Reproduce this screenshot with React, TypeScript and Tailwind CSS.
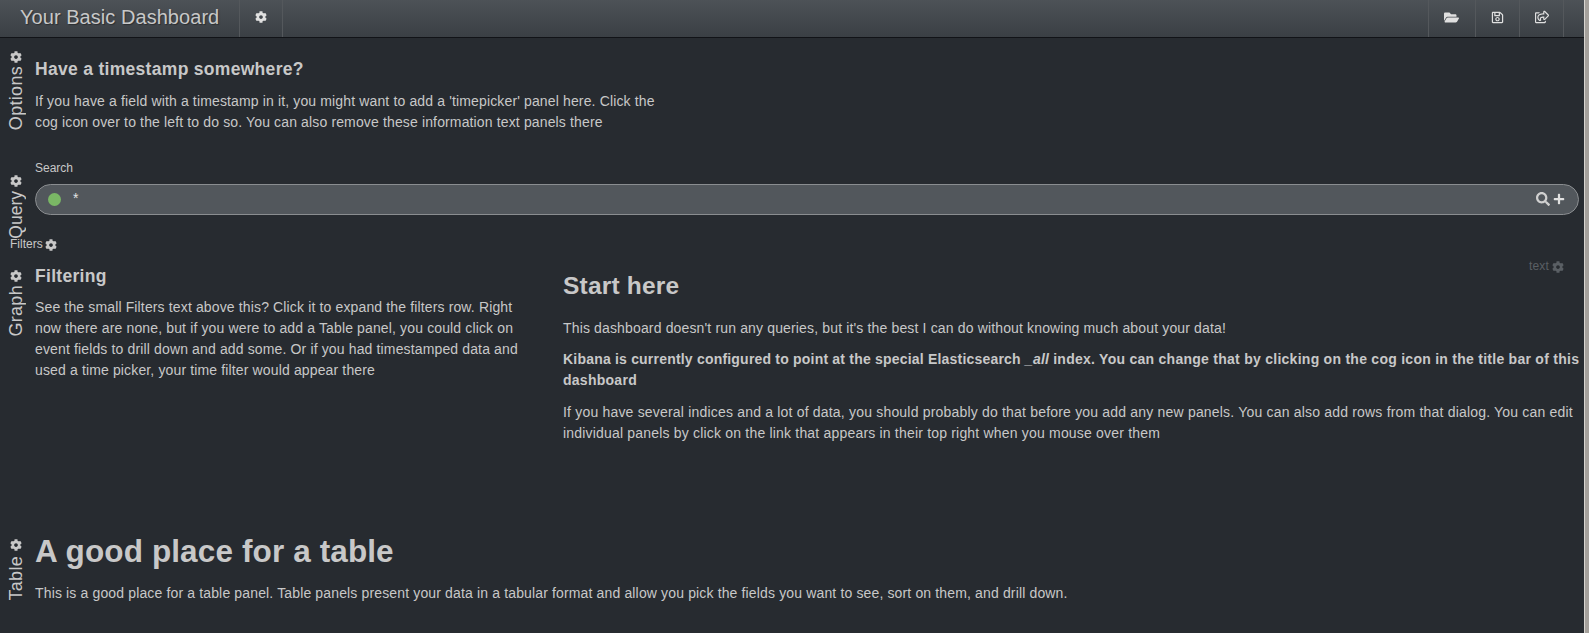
import React from "react";
import { FaCog, FaFolderOpen, FaRegSave, FaRegShareSquare, FaSearch, FaPlus } from "react-icons/fa";

function RowLabel({ label, className, labelClass }: { label: string; className: string; labelClass: string }) {
  return (
    <div className={"w-[35px] shrink-0 flex flex-col items-center " + className}>
      <FaCog className="shrink-0 text-[12px] text-[#c8c8c8] mb-[3px] ml-[-3px]" />
      <span className={"[writing-mode:vertical-rl] rotate-180 leading-[20px] text-[#c8c8c8] ml-[-3px] whitespace-nowrap " + labelClass}>{label}</span>
    </div>
  );
}

function NavCell({ children, className }: { children: React.ReactNode; className: string }) {
  return <div className={"h-full flex items-center justify-center pb-[3px] border-l border-[#54585c] " + className}>{children}</div>;
}

export default function App() {
  return (
    <div className="w-[1589px] h-[633px] overflow-hidden flex bg-[#272b30] text-[#c8c8c8] text-[14px] leading-[21px] font-['Liberation_Sans',Arial,sans-serif]">
      <div className="w-[1584px] shrink-0 flex flex-col">
        <div className="h-[38px] shrink-0 flex border-b border-[#111317] bg-gradient-to-b from-[#4d5257] to-[#3a3f44]">
          <div className="w-[239px] pl-[20px] text-[20px] leading-[34px] tracking-[0.05px] text-[#c8c8c8] [text-shadow:1px_1px_1px_rgba(0,0,0,0.35)]">Your Basic Dashboard</div>
          <NavCell className="w-[44px] border-r"><FaCog className="text-[12px] text-[#e0e0e0]" /></NavCell>
          <div className="flex-1" />
          <NavCell className="w-[47px] pr-[2px]"><FaFolderOpen className="text-[15px] text-[#e0e0e0]" /></NavCell>
          <NavCell className="w-[44px]"><FaRegSave className="text-[13px] text-[#e0e0e0]" /></NavCell>
          <NavCell className="w-[44px]"><FaRegShareSquare className="text-[14px] text-[#e0e0e0]" /></NavCell>
          <NavCell className="w-[21px]"><span /></NavCell>
        </div>

        <div className="h-[112px] shrink-0 flex pt-[13px]">
          <RowLabel label="Options" className="" labelClass="text-[18px] tracking-[0.3px]" />
          <div className="w-[640px] tracking-[0.14px]">
            <h4 className="text-[17.5px] leading-[20px] font-bold tracking-[0.3px] mt-[8px] mb-[12px]">Have a timestamp somewhere?</h4>
            <p>If you have a field with a timestamp in it, you might want to add a 'timepicker' panel here. Click the cog icon over to the left to do so. You can also remove these information text panels there</p>
          </div>
        </div>

        <div className="h-[85px] shrink-0 flex pt-[23px]">
          <RowLabel label="Query" className="mt-[2px]" labelClass="text-[17.5px] mt-[1px]" />
          <div className="flex-1 mr-[5px] mt-[-14px]">
            <div className="text-[12px] leading-[18px] mb-[7px]">Search</div>
            <div className="h-[31px] rounded-[16px] border border-[#8a8d90] bg-[#52575c] flex items-center pl-[12px] pr-[13px]">
              <span className="w-[13px] h-[13px] rounded-full bg-[#7ab765] shrink-0" />
              <span className="ml-[12px] mt-[-3px] text-[14px] text-[#e4e4e4]">*</span>
              <span className="flex-1" />
              <FaSearch className="text-[14px] text-[#d0d0d0] mb-[1px]" />
              <FaPlus className="text-[12px] text-[#e0e0e0] ml-[3px] mb-[2px]" />
            </div>
          </div>
        </div>

        <div className="h-[27px] shrink-0 flex items-center pl-[10px] pb-[8px] text-[12px]">
          Filters <FaCog className="text-[12px] ml-[2px]" />
        </div>

        <div className="h-[268px] shrink-0 flex pt-[3px]">
          <RowLabel label="Graph" className="mt-[5px]" labelClass="text-[18px] tracking-[0.3px]" />
          <div className="w-[492px] tracking-[0.14px]">
            <h4 className="text-[17.5px] leading-[20px] font-bold tracking-[0.3px] mt-[1px] mb-[11px]">Filtering</h4>
            <p>See the small Filters text above this? Click it to expand the filters row. Right now there are none, but if you were to add a Table panel, you could click on event fields to drill down and add some. Or if you had timestamped data and used a time picker, your time filter would appear there</p>
          </div>
          <div className="flex-1 ml-[36px] relative tracking-[0.19px]">
            <div className="absolute right-[20px] top-[-9px] flex items-center text-[12px] text-[#5a5f64]">text <FaCog className="text-[12px] ml-[3px]" /></div>
            <h3 className="text-[24.5px] leading-[40px] font-bold tracking-[0.2px] mt-[1px] mb-[12px]">Start here</h3>
            <p className="mb-[10px] tracking-[0.15px]">This dashboard doesn't run any queries, but it's the best I can do without knowing much about your data!</p>
            <p className="mb-[11px] font-bold tracking-[0.2px]">Kibana is currently configured to point at the special Elasticsearch <em>_all</em> <span className="tracking-[0.265px]">index. You can change that by clicking on the cog icon in the title bar of this dashboard</span></p>
            <p>If you have several indices and a lot of data, you should probably do that before you add any new panels. You can also add rows from that dialog. You can edit individual panels by click on the link that appears in their top right when you mouse over them</p>
          </div>
        </div>

        <div className="flex-1 flex pt-[9px]">
          <RowLabel label="Table" className="" labelClass="text-[18px] tracking-[0.3px] mt-[2px]" />
          <div className="mt-[-8px] tracking-[0.145px]">
            <h2 className="text-[31.5px] leading-[40px] font-bold tracking-[0.12px] mb-[12px]">A good place for a table</h2>
            <p>This is a good place for a table panel. Table panels present your data in a tabular format and allow you pick the fields you want to see, sort on them, and drill down.</p>
          </div>
        </div>
      </div>
      <div className="flex-1 bg-[#a5a19c] border-l border-[#d8d5d0]" />
    </div>
  );
}
